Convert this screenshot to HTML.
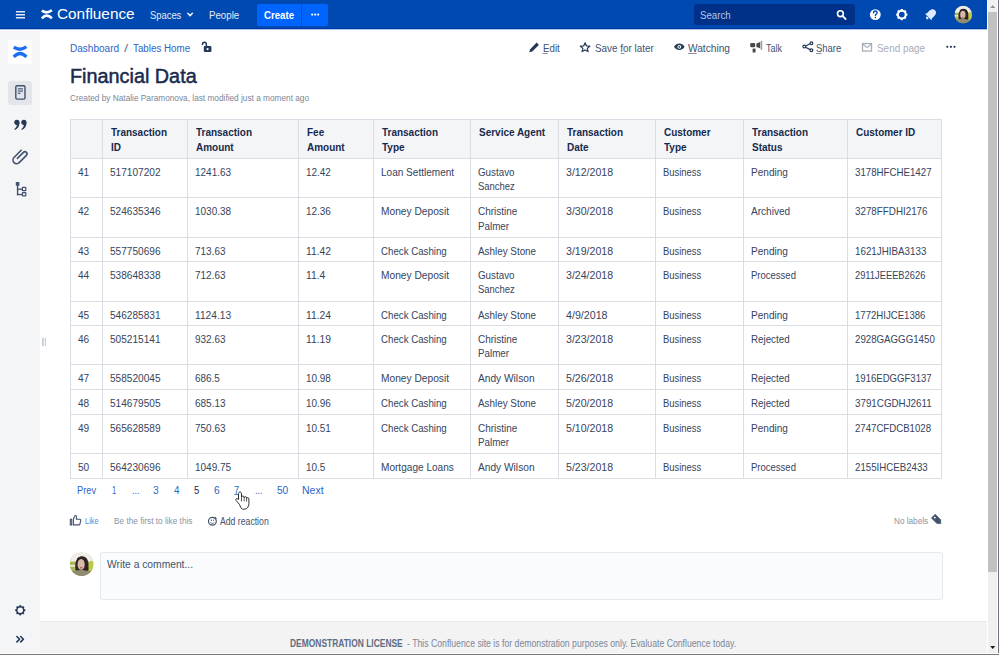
<!DOCTYPE html>
<html><head><meta charset="utf-8"><style>
html,body{margin:0;padding:0;width:999px;height:655px;overflow:hidden;background:#fff;font-family:"Liberation Sans", sans-serif;}
.t{position:absolute;white-space:nowrap;transform-origin:0 0;}
.abs{position:absolute;}
svg{position:absolute;overflow:visible;}
</style></head><body>
<!-- header -->
<div class="abs" style="left:0;top:0;width:986.6px;height:28px;background:#0049b0"></div>
<div class="abs" style="left:0;top:28px;width:986.6px;height:1px;background:#0039a6"></div>
<div class="abs" style="left:0;top:29px;width:986.6px;height:1px;background:#aec1e6"></div>
<div class="abs" style="left:256.8px;top:3.6px;width:71.4px;height:22.3px;background:#0065ff;border-radius:2px"></div>
<div class="abs" style="left:301px;top:3.6px;width:1px;height:22.3px;background:#0052cc"></div>
<div class="abs" style="left:693.5px;top:3.9px;width:161.3px;height:21.6px;background:#003087;border-radius:3px"></div>
<!-- sidebar -->
<div class="abs" style="left:0;top:31px;width:40.4px;height:622px;background:#f4f5f7"></div>
<div class="abs" style="left:7.8px;top:40.4px;width:24px;height:23.3px;background:#fff"></div>
<div class="abs" style="left:7.8px;top:80.6px;width:24.6px;height:24px;background:#e3e5ea;border-radius:3px"></div>
<!-- footer -->
<div class="abs" style="left:40px;top:621px;width:947px;height:32px;background:#f3f3f3"></div>
<div class="abs" style="left:40px;top:621px;width:947px;height:1px;background:#ebebeb"></div>
<!-- comment -->
<div class="abs" style="left:100px;top:551.5px;width:842.5px;height:48px;background:#fafbfc;border:1px solid #e6e8ec;border-radius:3px;box-sizing:border-box"></div>
<!-- scrollbar -->
<div class="abs" style="left:986.6px;top:0;width:12.4px;height:655px;background:#ffffff"></div>
<div class="abs" style="left:988.3px;top:0;width:8.5px;height:653px;background:#f0f0f0"></div>
<div class="abs" style="left:988.3px;top:12px;width:8.5px;height:560px;background:#c1c1c1"></div>
<div class="abs" style="left:998px;top:0;width:1px;height:655px;background:#6b7280"></div>
<div class="abs" style="left:0;top:653px;width:999px;height:1px;background:#ffffff"></div>
<div class="abs" style="left:0;top:654px;width:999px;height:1px;background:#7a7a7a"></div>
<div class="abs" style="left:70px;top:119.4px;width:871.7px;height:38.900000000000006px;background:#f4f5f7"></div><div class="abs" style="left:69.50px;top:118.90px;width:1px;height:359.60px;background:#dadde4"></div><div class="abs" style="left:101.90px;top:118.90px;width:1px;height:359.60px;background:#dadde4"></div><div class="abs" style="left:187.00px;top:118.90px;width:1px;height:359.60px;background:#dadde4"></div><div class="abs" style="left:298.00px;top:118.90px;width:1px;height:359.60px;background:#dadde4"></div><div class="abs" style="left:372.70px;top:118.90px;width:1px;height:359.60px;background:#dadde4"></div><div class="abs" style="left:470.00px;top:118.90px;width:1px;height:359.60px;background:#dadde4"></div><div class="abs" style="left:558.10px;top:118.90px;width:1px;height:359.60px;background:#dadde4"></div><div class="abs" style="left:654.90px;top:118.90px;width:1px;height:359.60px;background:#dadde4"></div><div class="abs" style="left:742.90px;top:118.90px;width:1px;height:359.60px;background:#dadde4"></div><div class="abs" style="left:846.90px;top:118.90px;width:1px;height:359.60px;background:#dadde4"></div><div class="abs" style="left:941.20px;top:118.90px;width:1px;height:359.60px;background:#dadde4"></div><div class="abs" style="left:69.50px;top:118.90px;width:872.70px;height:1px;background:#dadde4"></div><div class="abs" style="left:69.50px;top:157.80px;width:872.70px;height:1px;background:#dadde4"></div><div class="abs" style="left:69.50px;top:197.00px;width:872.70px;height:1px;background:#dadde4"></div><div class="abs" style="left:69.50px;top:236.90px;width:872.70px;height:1px;background:#dadde4"></div><div class="abs" style="left:69.50px;top:260.80px;width:872.70px;height:1px;background:#dadde4"></div><div class="abs" style="left:69.50px;top:300.60px;width:872.70px;height:1px;background:#dadde4"></div><div class="abs" style="left:69.50px;top:324.60px;width:872.70px;height:1px;background:#dadde4"></div><div class="abs" style="left:69.50px;top:364.10px;width:872.70px;height:1px;background:#dadde4"></div><div class="abs" style="left:69.50px;top:388.70px;width:872.70px;height:1px;background:#dadde4"></div><div class="abs" style="left:69.50px;top:413.80px;width:872.70px;height:1px;background:#dadde4"></div><div class="abs" style="left:69.50px;top:452.80px;width:872.70px;height:1px;background:#dadde4"></div><div class="abs" style="left:69.50px;top:477.50px;width:872.70px;height:1px;background:#dadde4"></div><div class="t" style="left:111.10px;top:125.89px;font-size:10.61px;line-height:13.26px;color:#172b4d;font-weight:bold;transform:scaleX(0.940);">Transaction</div>
<div class="t" style="left:111.10px;top:140.59px;font-size:10.61px;line-height:13.26px;color:#172b4d;font-weight:bold;transform:scaleX(0.940);">ID</div>
<div class="t" style="left:196.20px;top:125.89px;font-size:10.61px;line-height:13.26px;color:#172b4d;font-weight:bold;transform:scaleX(0.940);">Transaction</div>
<div class="t" style="left:196.20px;top:140.59px;font-size:10.61px;line-height:13.26px;color:#172b4d;font-weight:bold;transform:scaleX(0.940);">Amount</div>
<div class="t" style="left:307.20px;top:125.89px;font-size:10.61px;line-height:13.26px;color:#172b4d;font-weight:bold;transform:scaleX(0.940);">Fee</div>
<div class="t" style="left:307.20px;top:140.59px;font-size:10.61px;line-height:13.26px;color:#172b4d;font-weight:bold;transform:scaleX(0.940);">Amount</div>
<div class="t" style="left:381.90px;top:125.89px;font-size:10.61px;line-height:13.26px;color:#172b4d;font-weight:bold;transform:scaleX(0.940);">Transaction</div>
<div class="t" style="left:381.90px;top:140.59px;font-size:10.61px;line-height:13.26px;color:#172b4d;font-weight:bold;transform:scaleX(0.940);">Type</div>
<div class="t" style="left:479.20px;top:125.89px;font-size:10.61px;line-height:13.26px;color:#172b4d;font-weight:bold;transform:scaleX(0.940);">Service Agent</div>
<div class="t" style="left:567.30px;top:125.89px;font-size:10.61px;line-height:13.26px;color:#172b4d;font-weight:bold;transform:scaleX(0.940);">Transaction</div>
<div class="t" style="left:567.30px;top:140.59px;font-size:10.61px;line-height:13.26px;color:#172b4d;font-weight:bold;transform:scaleX(0.940);">Date</div>
<div class="t" style="left:664.10px;top:125.89px;font-size:10.61px;line-height:13.26px;color:#172b4d;font-weight:bold;transform:scaleX(0.940);">Customer</div>
<div class="t" style="left:664.10px;top:140.59px;font-size:10.61px;line-height:13.26px;color:#172b4d;font-weight:bold;transform:scaleX(0.940);">Type</div>
<div class="t" style="left:752.10px;top:125.89px;font-size:10.61px;line-height:13.26px;color:#172b4d;font-weight:bold;transform:scaleX(0.940);">Transaction</div>
<div class="t" style="left:752.10px;top:140.59px;font-size:10.61px;line-height:13.26px;color:#172b4d;font-weight:bold;transform:scaleX(0.940);">Status</div>
<div class="t" style="left:856.10px;top:125.89px;font-size:10.61px;line-height:13.26px;color:#172b4d;font-weight:bold;transform:scaleX(0.940);">Customer ID</div>
<div class="t" style="left:77.60px;top:164.79px;font-size:11.34px;line-height:14.17px;color:#36445c;transform:scaleX(0.891);">41</div>
<div class="t" style="left:110.00px;top:164.79px;font-size:11.34px;line-height:14.17px;color:#36445c;transform:scaleX(0.891);">517107202</div>
<div class="t" style="left:195.10px;top:164.79px;font-size:11.34px;line-height:14.17px;color:#36445c;transform:scaleX(0.881);">1241.63</div>
<div class="t" style="left:306.10px;top:164.79px;font-size:11.34px;line-height:14.17px;color:#36445c;transform:scaleX(0.877);">12.42</div>
<div class="t" style="left:380.80px;top:164.79px;font-size:11.34px;line-height:14.17px;color:#36445c;transform:scaleX(0.886);">Loan Settlement</div>
<div class="t" style="left:478.10px;top:164.79px;font-size:11.34px;line-height:14.17px;color:#36445c;transform:scaleX(0.865);">Gustavo</div>
<div class="t" style="left:478.10px;top:179.49px;font-size:11.34px;line-height:14.17px;color:#36445c;transform:scaleX(0.835);">Sanchez</div>
<div class="t" style="left:566.20px;top:164.79px;font-size:11.34px;line-height:14.17px;color:#36445c;transform:scaleX(0.935);">3/12/2018</div>
<div class="t" style="left:663.00px;top:164.79px;font-size:11.34px;line-height:14.17px;color:#36445c;transform:scaleX(0.830);">Business</div>
<div class="t" style="left:751.00px;top:164.79px;font-size:11.34px;line-height:14.17px;color:#36445c;transform:scaleX(0.887);">Pending</div>
<div class="t" style="left:855.00px;top:164.79px;font-size:11.34px;line-height:14.17px;color:#36445c;transform:scaleX(0.856);">3178HFCHE1427</div>
<div class="t" style="left:77.60px;top:203.99px;font-size:11.34px;line-height:14.17px;color:#36445c;transform:scaleX(0.891);">42</div>
<div class="t" style="left:110.00px;top:203.99px;font-size:11.34px;line-height:14.17px;color:#36445c;transform:scaleX(0.891);">524635346</div>
<div class="t" style="left:195.10px;top:203.99px;font-size:11.34px;line-height:14.17px;color:#36445c;transform:scaleX(0.881);">1030.38</div>
<div class="t" style="left:306.10px;top:203.99px;font-size:11.34px;line-height:14.17px;color:#36445c;transform:scaleX(0.877);">12.36</div>
<div class="t" style="left:380.80px;top:203.99px;font-size:11.34px;line-height:14.17px;color:#36445c;transform:scaleX(0.901);">Money Deposit</div>
<div class="t" style="left:478.10px;top:203.99px;font-size:11.34px;line-height:14.17px;color:#36445c;transform:scaleX(0.880);">Christine</div>
<div class="t" style="left:478.10px;top:218.69px;font-size:11.34px;line-height:14.17px;color:#36445c;transform:scaleX(0.866);">Palmer</div>
<div class="t" style="left:566.20px;top:203.99px;font-size:11.34px;line-height:14.17px;color:#36445c;transform:scaleX(0.935);">3/30/2018</div>
<div class="t" style="left:663.00px;top:203.99px;font-size:11.34px;line-height:14.17px;color:#36445c;transform:scaleX(0.830);">Business</div>
<div class="t" style="left:751.00px;top:203.99px;font-size:11.34px;line-height:14.17px;color:#36445c;transform:scaleX(0.890);">Archived</div>
<div class="t" style="left:855.00px;top:203.99px;font-size:11.34px;line-height:14.17px;color:#36445c;transform:scaleX(0.866);">3278FFDHI2176</div>
<div class="t" style="left:77.60px;top:243.89px;font-size:11.34px;line-height:14.17px;color:#36445c;transform:scaleX(0.891);">43</div>
<div class="t" style="left:110.00px;top:243.89px;font-size:11.34px;line-height:14.17px;color:#36445c;transform:scaleX(0.891);">557750696</div>
<div class="t" style="left:195.10px;top:243.89px;font-size:11.34px;line-height:14.17px;color:#36445c;transform:scaleX(0.880);">713.63</div>
<div class="t" style="left:306.10px;top:243.89px;font-size:11.34px;line-height:14.17px;color:#36445c;transform:scaleX(0.904);">11.42</div>
<div class="t" style="left:380.80px;top:243.89px;font-size:11.34px;line-height:14.17px;color:#36445c;transform:scaleX(0.856);">Check Cashing</div>
<div class="t" style="left:478.10px;top:243.89px;font-size:11.34px;line-height:14.17px;color:#36445c;transform:scaleX(0.870);">Ashley Stone</div>
<div class="t" style="left:566.20px;top:243.89px;font-size:11.34px;line-height:14.17px;color:#36445c;transform:scaleX(0.935);">3/19/2018</div>
<div class="t" style="left:663.00px;top:243.89px;font-size:11.34px;line-height:14.17px;color:#36445c;transform:scaleX(0.830);">Business</div>
<div class="t" style="left:751.00px;top:243.89px;font-size:11.34px;line-height:14.17px;color:#36445c;transform:scaleX(0.887);">Pending</div>
<div class="t" style="left:855.00px;top:243.89px;font-size:11.34px;line-height:14.17px;color:#36445c;transform:scaleX(0.865);">1621JHIBA3133</div>
<div class="t" style="left:77.60px;top:267.79px;font-size:11.34px;line-height:14.17px;color:#36445c;transform:scaleX(0.891);">44</div>
<div class="t" style="left:110.00px;top:267.79px;font-size:11.34px;line-height:14.17px;color:#36445c;transform:scaleX(0.891);">538648338</div>
<div class="t" style="left:195.10px;top:267.79px;font-size:11.34px;line-height:14.17px;color:#36445c;transform:scaleX(0.880);">712.63</div>
<div class="t" style="left:306.10px;top:267.79px;font-size:11.34px;line-height:14.17px;color:#36445c;transform:scaleX(0.908);">11.4</div>
<div class="t" style="left:380.80px;top:267.79px;font-size:11.34px;line-height:14.17px;color:#36445c;transform:scaleX(0.901);">Money Deposit</div>
<div class="t" style="left:478.10px;top:267.79px;font-size:11.34px;line-height:14.17px;color:#36445c;transform:scaleX(0.865);">Gustavo</div>
<div class="t" style="left:478.10px;top:282.49px;font-size:11.34px;line-height:14.17px;color:#36445c;transform:scaleX(0.835);">Sanchez</div>
<div class="t" style="left:566.20px;top:267.79px;font-size:11.34px;line-height:14.17px;color:#36445c;transform:scaleX(0.935);">3/24/2018</div>
<div class="t" style="left:663.00px;top:267.79px;font-size:11.34px;line-height:14.17px;color:#36445c;transform:scaleX(0.830);">Business</div>
<div class="t" style="left:751.00px;top:267.79px;font-size:11.34px;line-height:14.17px;color:#36445c;transform:scaleX(0.840);">Processed</div>
<div class="t" style="left:855.00px;top:267.79px;font-size:11.34px;line-height:14.17px;color:#36445c;transform:scaleX(0.823);">2911JEEEB2626</div>
<div class="t" style="left:77.60px;top:307.59px;font-size:11.34px;line-height:14.17px;color:#36445c;transform:scaleX(0.891);">45</div>
<div class="t" style="left:110.00px;top:307.59px;font-size:11.34px;line-height:14.17px;color:#36445c;transform:scaleX(0.891);">546285831</div>
<div class="t" style="left:195.10px;top:307.59px;font-size:11.34px;line-height:14.17px;color:#36445c;transform:scaleX(0.900);">1124.13</div>
<div class="t" style="left:306.10px;top:307.59px;font-size:11.34px;line-height:14.17px;color:#36445c;transform:scaleX(0.904);">11.24</div>
<div class="t" style="left:380.80px;top:307.59px;font-size:11.34px;line-height:14.17px;color:#36445c;transform:scaleX(0.856);">Check Cashing</div>
<div class="t" style="left:478.10px;top:307.59px;font-size:11.34px;line-height:14.17px;color:#36445c;transform:scaleX(0.870);">Ashley Stone</div>
<div class="t" style="left:566.20px;top:307.59px;font-size:11.34px;line-height:14.17px;color:#36445c;transform:scaleX(0.941);">4/9/2018</div>
<div class="t" style="left:663.00px;top:307.59px;font-size:11.34px;line-height:14.17px;color:#36445c;transform:scaleX(0.830);">Business</div>
<div class="t" style="left:751.00px;top:307.59px;font-size:11.34px;line-height:14.17px;color:#36445c;transform:scaleX(0.887);">Pending</div>
<div class="t" style="left:855.00px;top:307.59px;font-size:11.34px;line-height:14.17px;color:#36445c;transform:scaleX(0.847);">1772HIJCE1386</div>
<div class="t" style="left:77.60px;top:331.59px;font-size:11.34px;line-height:14.17px;color:#36445c;transform:scaleX(0.891);">46</div>
<div class="t" style="left:110.00px;top:331.59px;font-size:11.34px;line-height:14.17px;color:#36445c;transform:scaleX(0.891);">505215141</div>
<div class="t" style="left:195.10px;top:331.59px;font-size:11.34px;line-height:14.17px;color:#36445c;transform:scaleX(0.880);">932.63</div>
<div class="t" style="left:306.10px;top:331.59px;font-size:11.34px;line-height:14.17px;color:#36445c;transform:scaleX(0.904);">11.19</div>
<div class="t" style="left:380.80px;top:331.59px;font-size:11.34px;line-height:14.17px;color:#36445c;transform:scaleX(0.856);">Check Cashing</div>
<div class="t" style="left:478.10px;top:331.59px;font-size:11.34px;line-height:14.17px;color:#36445c;transform:scaleX(0.880);">Christine</div>
<div class="t" style="left:478.10px;top:346.29px;font-size:11.34px;line-height:14.17px;color:#36445c;transform:scaleX(0.866);">Palmer</div>
<div class="t" style="left:566.20px;top:331.59px;font-size:11.34px;line-height:14.17px;color:#36445c;transform:scaleX(0.935);">3/23/2018</div>
<div class="t" style="left:663.00px;top:331.59px;font-size:11.34px;line-height:14.17px;color:#36445c;transform:scaleX(0.830);">Business</div>
<div class="t" style="left:751.00px;top:331.59px;font-size:11.34px;line-height:14.17px;color:#36445c;transform:scaleX(0.863);">Rejected</div>
<div class="t" style="left:855.00px;top:331.59px;font-size:11.34px;line-height:14.17px;color:#36445c;transform:scaleX(0.856);">2928GAGGG1450</div>
<div class="t" style="left:77.60px;top:371.09px;font-size:11.34px;line-height:14.17px;color:#36445c;transform:scaleX(0.891);">47</div>
<div class="t" style="left:110.00px;top:371.09px;font-size:11.34px;line-height:14.17px;color:#36445c;transform:scaleX(0.891);">558520045</div>
<div class="t" style="left:195.10px;top:371.09px;font-size:11.34px;line-height:14.17px;color:#36445c;transform:scaleX(0.877);">686.5</div>
<div class="t" style="left:306.10px;top:371.09px;font-size:11.34px;line-height:14.17px;color:#36445c;transform:scaleX(0.877);">10.98</div>
<div class="t" style="left:380.80px;top:371.09px;font-size:11.34px;line-height:14.17px;color:#36445c;transform:scaleX(0.901);">Money Deposit</div>
<div class="t" style="left:478.10px;top:371.09px;font-size:11.34px;line-height:14.17px;color:#36445c;transform:scaleX(0.898);">Andy Wilson</div>
<div class="t" style="left:566.20px;top:371.09px;font-size:11.34px;line-height:14.17px;color:#36445c;transform:scaleX(0.935);">5/26/2018</div>
<div class="t" style="left:663.00px;top:371.09px;font-size:11.34px;line-height:14.17px;color:#36445c;transform:scaleX(0.830);">Business</div>
<div class="t" style="left:751.00px;top:371.09px;font-size:11.34px;line-height:14.17px;color:#36445c;transform:scaleX(0.863);">Rejected</div>
<div class="t" style="left:855.00px;top:371.09px;font-size:11.34px;line-height:14.17px;color:#36445c;transform:scaleX(0.845);">1916EDGGF3137</div>
<div class="t" style="left:77.60px;top:395.69px;font-size:11.34px;line-height:14.17px;color:#36445c;transform:scaleX(0.891);">48</div>
<div class="t" style="left:110.00px;top:395.69px;font-size:11.34px;line-height:14.17px;color:#36445c;transform:scaleX(0.891);">514679505</div>
<div class="t" style="left:195.10px;top:395.69px;font-size:11.34px;line-height:14.17px;color:#36445c;transform:scaleX(0.880);">685.13</div>
<div class="t" style="left:306.10px;top:395.69px;font-size:11.34px;line-height:14.17px;color:#36445c;transform:scaleX(0.877);">10.96</div>
<div class="t" style="left:380.80px;top:395.69px;font-size:11.34px;line-height:14.17px;color:#36445c;transform:scaleX(0.856);">Check Cashing</div>
<div class="t" style="left:478.10px;top:395.69px;font-size:11.34px;line-height:14.17px;color:#36445c;transform:scaleX(0.870);">Ashley Stone</div>
<div class="t" style="left:566.20px;top:395.69px;font-size:11.34px;line-height:14.17px;color:#36445c;transform:scaleX(0.935);">5/20/2018</div>
<div class="t" style="left:663.00px;top:395.69px;font-size:11.34px;line-height:14.17px;color:#36445c;transform:scaleX(0.830);">Business</div>
<div class="t" style="left:751.00px;top:395.69px;font-size:11.34px;line-height:14.17px;color:#36445c;transform:scaleX(0.863);">Rejected</div>
<div class="t" style="left:855.00px;top:395.69px;font-size:11.34px;line-height:14.17px;color:#36445c;transform:scaleX(0.866);">3791CGDHJ2611</div>
<div class="t" style="left:77.60px;top:420.79px;font-size:11.34px;line-height:14.17px;color:#36445c;transform:scaleX(0.891);">49</div>
<div class="t" style="left:110.00px;top:420.79px;font-size:11.34px;line-height:14.17px;color:#36445c;transform:scaleX(0.891);">565628589</div>
<div class="t" style="left:195.10px;top:420.79px;font-size:11.34px;line-height:14.17px;color:#36445c;transform:scaleX(0.880);">750.63</div>
<div class="t" style="left:306.10px;top:420.79px;font-size:11.34px;line-height:14.17px;color:#36445c;transform:scaleX(0.877);">10.51</div>
<div class="t" style="left:380.80px;top:420.79px;font-size:11.34px;line-height:14.17px;color:#36445c;transform:scaleX(0.856);">Check Cashing</div>
<div class="t" style="left:478.10px;top:420.79px;font-size:11.34px;line-height:14.17px;color:#36445c;transform:scaleX(0.880);">Christine</div>
<div class="t" style="left:478.10px;top:435.49px;font-size:11.34px;line-height:14.17px;color:#36445c;transform:scaleX(0.866);">Palmer</div>
<div class="t" style="left:566.20px;top:420.79px;font-size:11.34px;line-height:14.17px;color:#36445c;transform:scaleX(0.935);">5/10/2018</div>
<div class="t" style="left:663.00px;top:420.79px;font-size:11.34px;line-height:14.17px;color:#36445c;transform:scaleX(0.830);">Business</div>
<div class="t" style="left:751.00px;top:420.79px;font-size:11.34px;line-height:14.17px;color:#36445c;transform:scaleX(0.887);">Pending</div>
<div class="t" style="left:855.00px;top:420.79px;font-size:11.34px;line-height:14.17px;color:#36445c;transform:scaleX(0.850);">2747CFDCB1028</div>
<div class="t" style="left:77.60px;top:459.79px;font-size:11.34px;line-height:14.17px;color:#36445c;transform:scaleX(0.891);">50</div>
<div class="t" style="left:110.00px;top:459.79px;font-size:11.34px;line-height:14.17px;color:#36445c;transform:scaleX(0.891);">564230696</div>
<div class="t" style="left:195.10px;top:459.79px;font-size:11.34px;line-height:14.17px;color:#36445c;transform:scaleX(0.881);">1049.75</div>
<div class="t" style="left:306.10px;top:459.79px;font-size:11.34px;line-height:14.17px;color:#36445c;transform:scaleX(0.873);">10.5</div>
<div class="t" style="left:380.80px;top:459.79px;font-size:11.34px;line-height:14.17px;color:#36445c;transform:scaleX(0.890);">Mortgage Loans</div>
<div class="t" style="left:478.10px;top:459.79px;font-size:11.34px;line-height:14.17px;color:#36445c;transform:scaleX(0.898);">Andy Wilson</div>
<div class="t" style="left:566.20px;top:459.79px;font-size:11.34px;line-height:14.17px;color:#36445c;transform:scaleX(0.935);">5/23/2018</div>
<div class="t" style="left:663.00px;top:459.79px;font-size:11.34px;line-height:14.17px;color:#36445c;transform:scaleX(0.830);">Business</div>
<div class="t" style="left:751.00px;top:459.79px;font-size:11.34px;line-height:14.17px;color:#36445c;transform:scaleX(0.840);">Processed</div>
<div class="t" style="left:855.00px;top:459.79px;font-size:11.34px;line-height:14.17px;color:#36445c;transform:scaleX(0.855);">2155IHCEB2433</div>

<div class="t" style="left:57.00px;top:6.35px;font-size:13.95px;line-height:17.44px;color:#ffffff;transform:scaleX(1.101);">Confluence</div>
<div class="t" style="left:149.50px;top:8.87px;font-size:11.05px;line-height:13.81px;color:#e6ecf8;transform:scaleX(0.850);">Spaces</div>
<div class="t" style="left:208.90px;top:8.87px;font-size:11.05px;line-height:13.81px;color:#e6ecf8;transform:scaleX(0.878);">People</div>
<div class="t" style="left:263.90px;top:9.05px;font-size:10.76px;line-height:13.44px;color:#ffffff;font-weight:bold;transform:scaleX(0.899);">Create</div>
<div class="t" style="left:700.40px;top:9.03px;font-size:10.47px;line-height:13.08px;color:#b8c7e6;transform:scaleX(0.923);">Search</div>
<div class="t" style="left:69.90px;top:42.07px;font-size:11.05px;line-height:13.81px;color:#2d64c8;transform:scaleX(0.909);">Dashboard</div>
<div class="t" style="left:123.80px;top:42.07px;font-size:11.05px;line-height:13.81px;color:#6b778c;transform:scaleX(1.368);">/</div>
<div class="t" style="left:132.90px;top:42.07px;font-size:11.05px;line-height:13.81px;color:#2d64c8;transform:scaleX(0.887);">Tables Home</div>
<div class="t" style="left:69.90px;top:64.03px;font-size:20.35px;line-height:25.44px;color:#172b4d;transform:scaleX(0.974);-webkit-text-stroke:0.5px #172b4d;">Financial Data</div>
<div class="t" style="left:69.90px;top:93.25px;font-size:9.01px;line-height:11.26px;color:#7a869a;transform:scaleX(0.919);">Created by Natalie Paramonova, last modified just a moment ago</div>
<div class="t" style="left:542.80px;top:41.36px;font-size:11.77px;line-height:14.72px;color:#42526e;transform:scaleX(0.828);text-decoration:none;">Edit</div>
<div class="t" style="left:594.50px;top:41.36px;font-size:11.77px;line-height:14.72px;color:#42526e;transform:scaleX(0.840);">Save for later</div>
<div class="t" style="left:688.20px;top:41.36px;font-size:11.77px;line-height:14.72px;color:#42526e;transform:scaleX(0.864);">Watching</div>
<div class="t" style="left:766.00px;top:41.36px;font-size:11.77px;line-height:14.72px;color:#42526e;transform:scaleX(0.763);">Talk</div>
<div class="t" style="left:816.40px;top:41.36px;font-size:11.77px;line-height:14.72px;color:#42526e;transform:scaleX(0.802);">Share</div>
<div class="t" style="left:877.00px;top:41.36px;font-size:11.77px;line-height:14.72px;color:#a5adba;transform:scaleX(0.843);">Send page</div>
<div class="t" style="left:77.40px;top:483.87px;font-size:11.05px;line-height:13.81px;color:#2d64c8;transform:scaleX(0.837);">Prev</div>
<div class="t" style="left:111.80px;top:483.87px;font-size:11.05px;line-height:13.81px;color:#2d64c8;transform:scaleX(0.684);">1</div>
<div class="t" style="left:131.50px;top:483.87px;font-size:11.05px;line-height:13.81px;color:#2d64c8;transform:scaleX(0.815);">...</div>
<div class="t" style="left:153.30px;top:483.87px;font-size:11.05px;line-height:13.81px;color:#2d64c8;transform:scaleX(0.928);">3</div>
<div class="t" style="left:173.50px;top:483.87px;font-size:11.05px;line-height:13.81px;color:#2d64c8;transform:scaleX(0.895);">4</div>
<div class="t" style="left:194.00px;top:483.87px;font-size:11.05px;line-height:13.81px;color:#172b4d;transform:scaleX(0.863);">5</div>
<div class="t" style="left:214.10px;top:483.87px;font-size:11.05px;line-height:13.81px;color:#2d64c8;transform:scaleX(0.928);">6</div>
<div class="t" style="left:234.30px;top:483.87px;font-size:11.05px;line-height:13.81px;color:#2d64c8;transform:scaleX(0.830);">7</div>
<div class="t" style="left:254.80px;top:483.87px;font-size:11.05px;line-height:13.81px;color:#2d64c8;transform:scaleX(0.826);">...</div>
<div class="t" style="left:277.20px;top:483.87px;font-size:11.05px;line-height:13.81px;color:#2d64c8;transform:scaleX(0.912);">50</div>
<div class="t" style="left:302.40px;top:483.87px;font-size:11.05px;line-height:13.81px;color:#2d64c8;transform:scaleX(0.951);">Next</div>
<div class="t" style="left:85.00px;top:515.97px;font-size:8.58px;line-height:10.72px;color:#5a86d8;transform:scaleX(0.865);">Like</div>
<div class="t" style="left:113.80px;top:515.97px;font-size:8.58px;line-height:10.72px;color:#8993a4;transform:scaleX(0.962);">Be the first to like this</div>
<div class="t" style="left:220.10px;top:515.81px;font-size:10.17px;line-height:12.72px;color:#42526e;transform:scaleX(0.854);">Add reaction</div>
<div class="t" style="left:893.80px;top:515.08px;font-size:9.59px;line-height:11.99px;color:#8993a4;transform:scaleX(0.855);">No labels</div>
<div class="t" style="left:107.00px;top:557.55px;font-size:10.76px;line-height:13.44px;color:#42526e;transform:scaleX(0.956);">Write a comment...</div>
<div class="t" style="left:290.30px;top:638.01px;font-size:10.17px;line-height:12.72px;color:#5e6c84;font-weight:bold;transform:scaleX(0.830);">DEMONSTRATION LICENSE</div>
<div class="t" style="left:406.50px;top:638.01px;font-size:10.17px;line-height:12.72px;color:#7a869a;transform:scaleX(0.856);">- This Confluence site is for demonstration purposes only. Evaluate Confluence today.</div>


<svg width="999" height="655" style="left:0;top:0">
 <defs>
  <clipPath id="avc"><circle cx="0" cy="0" r="1"/></clipPath>
  
 </defs>
 <g transform="translate(963.2,14.65) scale(8.8)">
   <g clip-path="url(#avc)">
    <rect x="-1" y="-1" width="2" height="2" fill="#a8b455"/>
    <rect x="-1" y="-1" width="2" height="0.78" fill="#f1eee9"/>
    <rect x="-1" y="0.05" width="0.55" height="0.18" fill="#e8e6d0"/>
    <ellipse cx="0.85" cy="0.2" rx="0.3" ry="0.5" fill="#bfca4a"/>
    <path d="M-0.5,0.55 C-0.6,0 -0.52,-0.58 -0.02,-0.68 C0.45,-0.7 0.62,-0.3 0.58,0.15 C0.62,0.5 0.55,0.7 0.4,0.85 L0.15,0.5 Z" fill="#2e2522"/>
    <ellipse cx="-0.04" cy="0.02" rx="0.3" ry="0.46" fill="#d9b9ab"/>
    <path d="M-0.36,-0.3 C-0.25,-0.58 0.2,-0.58 0.34,-0.28 L0.34,-0.5 C0.15,-0.68 -0.22,-0.68 -0.38,-0.48 Z" fill="#2e2522"/>
    <ellipse cx="-0.04" cy="0.3" rx="0.11" ry="0.06" fill="#c3484f"/>
    <path d="M-1,0.62 C-0.5,0.5 0.4,0.5 1,0.62 L1,1 L-1,1 Z" fill="#8f8a70"/>
   </g>
  </g>
 <g transform="translate(81.6,564.2) scale(11.8)">
   <g clip-path="url(#avc)">
    <rect x="-1" y="-1" width="2" height="2" fill="#a8b455"/>
    <rect x="-1" y="-1" width="2" height="0.78" fill="#f1eee9"/>
    <rect x="-1" y="0.05" width="0.55" height="0.18" fill="#e8e6d0"/>
    <ellipse cx="0.85" cy="0.2" rx="0.3" ry="0.5" fill="#bfca4a"/>
    <path d="M-0.5,0.55 C-0.6,0 -0.52,-0.58 -0.02,-0.68 C0.45,-0.7 0.62,-0.3 0.58,0.15 C0.62,0.5 0.55,0.7 0.4,0.85 L0.15,0.5 Z" fill="#2e2522"/>
    <ellipse cx="-0.04" cy="0.02" rx="0.3" ry="0.46" fill="#d9b9ab"/>
    <path d="M-0.36,-0.3 C-0.25,-0.58 0.2,-0.58 0.34,-0.28 L0.34,-0.5 C0.15,-0.68 -0.22,-0.68 -0.38,-0.48 Z" fill="#2e2522"/>
    <ellipse cx="-0.04" cy="0.3" rx="0.11" ry="0.06" fill="#c3484f"/>
    <path d="M-1,0.62 C-0.5,0.5 0.4,0.5 1,0.62 L1,1 L-1,1 Z" fill="#8f8a70"/>
   </g>
  </g>

 <!-- hamburger -->
 <g fill="#e3eaf7">
  <rect x="15.9" y="11" width="9.1" height="1.5"/>
  <rect x="15.9" y="14" width="9.1" height="1.5"/>
  <rect x="15.9" y="17" width="9.1" height="1.5"/>
 </g>
 <!-- header logo -->
 <defs>
  
 </defs>

 <g fill="none" stroke-width="3.3" stroke-linecap="butt" stroke="#ffffff" transform="translate(46.85,14.3) scale(0.8)">
   <path d="M-6.3,-4.6 Q-0.1,-0.2 6.3,-5.0"/>
   <path d="M-6.3,5.0 Q-0.1,-1.6 6.3,5.0"/>
  </g>
 <!-- spaces chevron -->
 <path d="M187.8,13.3 L190.1,15.6 L192.4,13.3" fill="none" stroke="#e6ecf8" stroke-width="1.6" stroke-linecap="round" stroke-linejoin="round"/>
 <!-- create more dots -->
 <g fill="#ffffff"><circle cx="312.2" cy="14.6" r="1.1"/><circle cx="315.2" cy="14.6" r="1.1"/><circle cx="318.2" cy="14.6" r="1.1"/></g>
 <!-- search icon -->
 <circle cx="840.4" cy="13.7" r="2.9" fill="none" stroke="#ffffff" stroke-width="1.6"/>
 <path d="M842.5,15.9 L845.6,19" stroke="#ffffff" stroke-width="1.8" stroke-linecap="round"/>
 <!-- help -->
 <circle cx="875.3" cy="14.6" r="5.4" fill="#ffffff"/>
 <path d="M873.5,12.9 C873.5,11.6 874.3,11 875.3,11 C876.4,11 877.1,11.7 877.1,12.7 C877.1,14 875.4,14.2 875.4,15.6" fill="none" stroke="#0049b0" stroke-width="1.4" stroke-linecap="round"/>
 <circle cx="875.4" cy="17.6" r="0.8" fill="#0049b0"/>
 <!-- gear header -->
 <g transform="translate(901.8,14.6)">
  <circle r="3.9" fill="none" stroke="#ffffff" stroke-width="2"/>
  <g fill="#ffffff">
   <rect x="-1.1" y="-5.6" width="2.2" height="2.4"/>
   <rect x="-1.1" y="3.2" width="2.2" height="2.4"/>
   <rect x="-5.6" y="-1.1" width="2.4" height="2.2"/>
   <rect x="3.2" y="-1.1" width="2.4" height="2.2"/>
   <rect x="-1.1" y="-5.6" width="2.2" height="2.4" transform="rotate(45)"/>
   <rect x="-1.1" y="3.2" width="2.2" height="2.4" transform="rotate(45)"/>
   <rect x="-5.6" y="-1.1" width="2.4" height="2.2" transform="rotate(45)"/>
   <rect x="3.2" y="-1.1" width="2.4" height="2.2" transform="rotate(45)"/>
  </g>
 </g>
 <!-- notifications (tilted bell) -->
 <g transform="translate(930.8,14.4) rotate(45)">
  <path d="M-4.6,3.6 L-3.6,1.8 L-3.6,-1.8 C-3.6,-4.4 -2,-6 0,-6 C2,-6 3.6,-4.4 3.6,-1.8 L3.6,1.8 L4.6,3.6 Z" fill="#deebff"/>
  <ellipse cx="0" cy="5.1" rx="1.5" ry="1.1" fill="#deebff"/>
 </g>
 <!-- sidebar logo -->
 <g fill="none" stroke-width="3.3" stroke-linecap="butt" stroke="#1d6ff2" transform="translate(20.1,51.8)">
   <path d="M-6.3,-4.6 Q-0.1,-0.2 6.3,-5.0"/>
   <path d="M-6.3,5.0 Q-0.1,-1.6 6.3,5.0"/>
  </g>
 <!-- page icon -->
 <rect x="15.8" y="85.7" width="9.2" height="13.4" rx="1.4" fill="none" stroke="#42526e" stroke-width="1.4"/>
 <g fill="#42526e"><rect x="17.8" y="88.3" width="5.2" height="1.1"/><rect x="17.8" y="90.5" width="5.2" height="1.1"/><rect x="17.8" y="92.7" width="2.8" height="1.1"/></g>
 <!-- quote icon -->
 <g fill="#253858">
  <circle cx="16.9" cy="122.3" r="2.6"/>
  <path d="M19.4,122.6 C19.6,126.3 17.8,128.9 14.9,130 L14.4,128.9 C16.1,127.9 16.9,126.4 16.9,124.6 Z"/>
  <circle cx="23.9" cy="122.3" r="2.6"/>
  <path d="M26.4,122.6 C26.6,126.3 24.8,128.9 21.9,130 L21.4,128.9 C23.1,127.9 23.9,126.4 23.9,124.6 Z"/>
 </g>
 <!-- paperclip -->
 <path d="M17.4,158.4 L23.2,152.6 C24.2,151.6 25.6,151.6 26.4,152.4 C27.2,153.2 27.2,154.6 26.2,155.6 L19.4,162.4 C17.8,164 15.4,164 14,162.6 C12.6,161.2 12.6,158.8 14.2,157.2 L21.2,150.2" fill="none" stroke="#42526e" stroke-width="1.6" stroke-linecap="round"/>
 <!-- tree icon -->
 <g fill="#42526e">
  <rect x="15.8" y="181.9" width="3.6" height="3.8" rx="0.5"/>
  <rect x="16.9" y="185" width="1.4" height="10.2"/>
  <rect x="16.9" y="188.6" width="5.5" height="1.3"/>
  <rect x="16.9" y="193.9" width="5.5" height="1.3"/>
 </g>
 <g fill="none" stroke="#42526e" stroke-width="1.2">
  <rect x="22.4" y="187.3" width="3.4" height="3.3" rx="0.4"/>
  <rect x="22.4" y="192.6" width="3.4" height="3.3" rx="0.4"/>
 </g>
 <!-- sidebar gear -->
 <g transform="translate(20.25,610.25)">
  <circle r="3.5" fill="none" stroke="#253858" stroke-width="1.5"/>
  <g fill="#253858">
   <rect x="-0.9" y="-5.1" width="1.8" height="1.9"/><rect x="-0.9" y="3.2" width="1.8" height="1.9"/>
   <rect x="-5.1" y="-0.9" width="1.9" height="1.8"/><rect x="3.2" y="-0.9" width="1.9" height="1.8"/>
   <g transform="rotate(45)"><rect x="-0.9" y="-5.1" width="1.8" height="1.9"/><rect x="-0.9" y="3.2" width="1.8" height="1.9"/>
   <rect x="-5.1" y="-0.9" width="1.9" height="1.8"/><rect x="3.2" y="-0.9" width="1.9" height="1.8"/></g>
  </g>
 </g>
 <!-- expand >> -->
 <g fill="none" stroke="#253858" stroke-width="1.6" stroke-linecap="round" stroke-linejoin="round">
  <path d="M16.9,636.5 L19.6,639.2 L16.9,641.9"/>
  <path d="M20.7,636.5 L23.4,639.2 L20.7,641.9"/>
 </g>
 <!-- sidebar resize handle -->
 <g fill="#c9cfd9"><rect x="42" y="337.8" width="1.9" height="8.4"/><rect x="44.9" y="337.8" width="1.1" height="8.4"/></g>
 <!-- lock -->
 <path d="M202.4,45 C202.4,43.3 203.2,42.3 204.4,42.3 C205.6,42.3 206.4,43.3 206.4,45 L206.4,46.4" fill="none" stroke="#253858" stroke-width="1.5"/>
 <rect x="203.8" y="46.1" width="7.6" height="6" rx="1" fill="#253858"/>
 <circle cx="207.6" cy="49.1" r="1.1" fill="#ffffff"/>
 <!-- pencil -->
 <path d="M536.6,42.6 L538.9,44.9 L532.2,51.6 L529.3,52.3 L530,49.4 Z" fill="#253858"/>
 <!-- star -->
 <path d="M585.1,42.8 L586.5,45.9 L589.8,46.2 L587.3,48.4 L588.1,51.6 L585.1,49.9 L582.1,51.6 L582.9,48.4 L580.4,46.2 L583.7,45.9 Z" fill="none" stroke="#253858" stroke-width="1.2" stroke-linejoin="round"/>
 <!-- eye -->
 <path d="M674,46.8 C675.5,44.3 677.3,43.4 679.3,43.4 C681.3,43.4 683.1,44.3 684.6,46.8 C683.1,49.2 681.3,50.1 679.3,50.1 C677.3,50.1 675.5,49.2 674,46.8 Z" fill="#253858"/>
 <circle cx="679.3" cy="46.8" r="1.9" fill="#ffffff"/>
 <circle cx="679.3" cy="46.8" r="0.9" fill="#253858"/>
 <!-- megaphone -->
 <g fill="#4a4a4a">
  <rect x="750.2" y="42.9" width="5" height="4.3" rx="1.2"/>
  <rect x="752.6" y="48.6" width="3" height="4" rx="0.9"/>
  <path d="M756.4,43.4 L760.2,42 L760.2,48.2 L756.4,47 Z"/>
 </g>
 <rect x="760.7" y="41" width="1.5" height="8.8" fill="#9a9a9a"/>
 <!-- share -->
 <g fill="none" stroke="#253858" stroke-width="1.2">
  <circle cx="804.3" cy="46.6" r="1.4"/><circle cx="811.4" cy="43.2" r="1.4"/><circle cx="811.4" cy="50.2" r="1.4"/>
  <path d="M805.6,46 L810.1,43.8 M805.6,47.2 L810.1,49.6"/>
 </g>
 <!-- mail -->
 <rect x="862.5" y="43.6" width="9" height="7.4" fill="none" stroke="#a5adba" stroke-width="1.3"/>
 <path d="M862.8,44.2 L867,47.6 L871.2,44.2" fill="none" stroke="#a5adba" stroke-width="1.2"/>
 <!-- more dots -->
 <g fill="#253858"><circle cx="947.3" cy="46.8" r="1.1"/><circle cx="950.9" cy="46.8" r="1.1"/><circle cx="954.5" cy="46.8" r="1.1"/></g>
 <!-- underlines access keys -->
 <g fill="#42526e" opacity="0.8">
  <rect x="542.7" y="53.1" width="5" height="0.8"/>
  <rect x="620.6" y="53.1" width="3.8" height="0.8"/>
  <rect x="688.2" y="53.1" width="8.4" height="0.8"/>
  <rect x="816.2" y="53.1" width="5.4" height="0.8"/>
 </g>
 <rect x="234.3" y="494" width="5.6" height="0.8" fill="#2d64c8"/>
 <!-- thumb -->
 <g fill="none" stroke="#42526e" stroke-width="1.1" stroke-linejoin="round">
  <rect x="70.3" y="519.4" width="1.4" height="5.6"/>
  <path d="M73.4,524.9 L73.4,519.2 L74.6,516.2 C74.9,515.3 76.4,515.3 76.4,516.4 L76.4,519.2 L79.6,519.2 C80.4,519.2 80.9,519.9 80.7,520.6 L79.9,524.1 C79.8,524.6 79.4,524.9 78.9,524.9 Z"/>
 </g>
 <!-- emoji -->
 <circle cx="212.4" cy="521.2" r="3.9" fill="none" stroke="#42526e" stroke-width="1.2"/>
 <g fill="#42526e"><rect x="211" y="519.6" width="0.8" height="1.4"/><rect x="213" y="519.6" width="0.8" height="1.4"/></g>
 <path d="M210.6,522.4 C211.4,523.8 213.4,523.8 214.2,522.4" fill="none" stroke="#42526e" stroke-width="0.9"/>
 <path d="M214.8,516.6 L217,518.8 L214.4,519.2 Z" fill="#42526e"/>
 <!-- tag -->
 <g transform="translate(937,519.8) rotate(-45)">
  <path d="M-2.7,-5.2 L2.7,-5.2 L2.7,2.5 L0,5.4 L-2.7,2.5 Z" fill="#42526e" stroke="#42526e" stroke-width="0.6" stroke-linejoin="round"/>
  <circle cx="0" cy="-3" r="0.9" fill="#ffffff"/>
 </g>
 <!-- scroll arrows -->
 <path d="M990.2,8.1 L992.7,5.2 L995.2,8.1 Z" fill="#8a8a8a"/>
 <path d="M990.2,646 L992.7,649 L995.2,646 Z" fill="#1a1a1a"/>
 <!-- hand cursor -->
 <path d="M239.4,504.3 L236.2,500.6 C235.5,499.8 235.9,498.6 237,498.6 C237.6,498.6 238.1,499 238.5,499.5 L238.5,493.6 C238.5,492.6 239.2,492 240,492 C240.8,492 241.5,492.6 241.5,493.6 L241.5,497.2 C241.5,496.4 242.1,496 242.8,496 C243.5,496 244.1,496.5 244.1,497.3 L244.1,497.6 C244.2,497 244.8,496.7 245.4,496.7 C246.1,496.7 246.6,497.2 246.6,498 L246.6,498.4 C246.8,497.9 247.3,497.7 247.8,497.7 C248.4,497.7 248.9,498.2 248.9,498.9 L248.9,503.6 C248.9,506.6 247.2,509.2 244.3,509.2 L242.6,509.2 C241.2,509.2 240.3,506.3 239.4,504.3 Z" fill="#ffffff" stroke="#1a1a1a" stroke-width="0.9" stroke-linejoin="round"/>
 <g stroke="#1a1a1a" stroke-width="0.7"><path d="M241.5,497.3 L241.5,501.4 M244.1,497.6 L244.1,501.4 M246.6,498.4 L246.6,501.6"/></g>
</svg>

</body></html>
